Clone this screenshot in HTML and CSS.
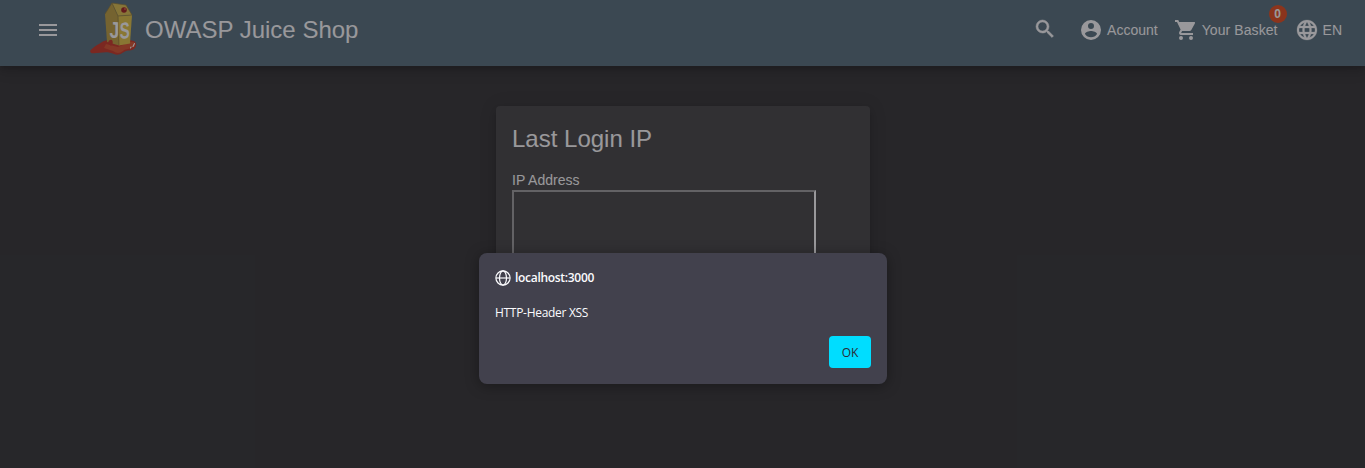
FILE: index.html
```html
<!DOCTYPE html>
<html lang="en">
<head>
<meta charset="utf-8">
<title>OWASP Juice Shop</title>
<link rel="stylesheet" href="styles.css">
</head>
<body>
<div class="app">
  <header class="toolbar">
    <svg class="icon menu" viewBox="0 0 24 24"><path d="M3 18h18v-2H3v2zm0-5h18v-2H3v2zm0-7v2h18V6H3z"/></svg>
    <svg class="logo" viewBox="0 0 48 56">
      <path fill="#c93322" d="M1 51C5 46 9 45 13 42C19 38 38 39 45 41Q49 43 46 48C42 52 39 49 35 52Q30 56 25 54C17 50 10 54 2 53Z"/>
      <path fill="#d9502a" d="M17 44L29 47L41 42Q47 41 46 46C41 50 37 48 34 51Q29 55 24 51L15 48Z"/>
      <path fill="#bd9f3c" d="M23 3L16 14L18 42L30 45.500L29 16Z"/>
      <path fill="#dcbf4c" d="M23 3L37 5L43 15L29 16Z"/>
      <path fill="#e2c343" d="M29 16L43 15L41 43.500L30 45.500Z"/>
      <path fill="none" stroke="#8c7837" stroke-width=".7" d="M23 3L37 5L43 15L29 16L23 3L16 14M29 16L30 45"/>
      <circle cx="35" cy="10" r="2.8" fill="#9e1c19"/>
      <circle cx="36" cy="9" r=".9" fill="#e25c4b"/>
      <text class="logo-letter" transform="matrix(.76 .06 0 1 20.500 37.500)">J</text>
      <text class="logo-letter" transform="matrix(.65 -.04 0 1 30.800 38.800)">S</text>
      <path fill="#c93322" d="M19 43Q20 39 23 40Q25 43 22 46Z"/>
      <path fill="none" stroke="#fff" stroke-width="1.100" stroke-linecap="round" d="M41.500 48L42 47M44 46.500L45.500 43.500"/>
    </svg>
    <span class="title">OWASP Juice Shop</span>
    <svg class="icon search" viewBox="0 0 24 24"><path d="M15.5 14h-.79l-.28-.27A6.47 6.47 0 0 0 16 9.5 6.5 6.5 0 1 0 9.500 16c1.610 0 3.090-.59 4.230-1.570l.27.28v.79l5 4.990L20.490 19l-4.990-5zm-6 0a4.500 4.500 0 1 1 0-9 4.500 4.500 0 0 1 0 9z"/></svg>
    <div class="action account">
      <svg class="icon" viewBox="0 0 24 24"><path d="M12 2a10 10 0 1 0 0 20 10 10 0 0 0 0-20zm0 3a3 3 0 1 1 0 6 3 3 0 0 1 0-6zm0 14.200a7.200 7.200 0 0 1-6-3.220c.03-1.990 4-3.080 6-3.080s5.970 1.090 6 3.080a7.200 7.200 0 0 1-6 3.220z"/></svg>
      <span>Account</span>
    </div>
    <div class="action basket">
      <svg class="icon" viewBox="0 0 24 24"><path d="M7 18a2 2 0 1 0 0 4 2 2 0 0 0 0-4zM1 2v2h2l3.600 7.590-1.350 2.450C4.520 15.370 5.480 17 7 17h12v-2H7.420a.25.25 0 0 1-.25-.25l.03-.12.900-1.630h7.450c.75 0 1.410-.41 1.750-1.030l3.580-6.490A1 1 0 0 0 20 4H5.210l-.94-2H1zm16 16a2 2 0 1 0 0 4 2 2 0 0 0 0-4z"/></svg>
      <span>Your Basket</span>
      <span class="badge">0</span>
    </div>
    <div class="action language">
      <svg class="icon globe-bold" viewBox="0 0 24 24"><path d="M11.990 2C6.470 2 2 6.480 2 12s4.470 10 9.990 10C17.520 22 22 17.520 22 12S17.520 2 11.990 2zm6.930 6h-2.950a15.650 15.650 0 0 0-1.380-3.560A8.030 8.030 0 0 1 18.920 8zM12 4.040c.83 1.200 1.480 2.530 1.910 3.960h-3.820c.43-1.430 1.080-2.760 1.910-3.960zM4.260 14C4.100 13.360 4 12.690 4 12s.1-1.360.26-2h3.380c-.08.66-.14 1.320-.14 2s.06 1.340.14 2H4.260zm.82 2h2.950c.32 1.250.78 2.450 1.380 3.560A7.990 7.990 0 0 1 5.080 16zm2.950-8H5.080a7.990 7.990 0 0 1 4.330-3.560A15.650 15.650 0 0 0 8.030 8zM12 19.960c-.83-1.200-1.480-2.530-1.910-3.960h3.820c-.43 1.430-1.080 2.760-1.910 3.960zM14.340 14H9.660c-.09-.66-.16-1.320-.16-2s.07-1.350.16-2h4.680c.09.65.16 1.320.16 2s-.07 1.340-.16 2zm.25 5.560c.6-1.110 1.060-2.310 1.380-3.560h2.950a8.030 8.030 0 0 1-4.330 3.560zM16.360 14c.08-.66.14-1.320.14-2s-.06-1.340-.14-2h3.380c.16.64.26 1.310.26 2s-.1 1.360-.26 2h-3.380z"/></svg>
      <span>EN</span>
    </div>
  </header>
  <main class="content">
    <section class="card">
      <h1 class="card-title">Last Login IP</h1>
      <div class="label">IP Address</div>
      <div class="frame"></div>
    </section>
  </main>
</div>
<div class="backdrop">
  <div class="dialog" role="alertdialog">
    <div class="origin">
      <svg class="globe" viewBox="0 0 16 16"><circle cx="8" cy="8" r="7.100"/><ellipse cx="8" cy="8" rx="3.500" ry="7.100"/><path d="M1 8h14"/></svg>
      <span>localhost:3000</span>
    </div>
    <p class="message">HTTP-Header XSS</p>
    <button class="ok">OK</button>
  </div>
</div>
</body>
</html>
```
FILE: styles.css
```css
* { box-sizing: border-box; }
body {
  margin: 0;
  height: 468px;
  overflow: hidden;
  position: relative;
  background: #303030;
  color: #fff;
  font: 14px "Liberation Sans", Arial, sans-serif;
}
.toolbar {
  height: 66px;
  padding: 0 23px 6px 36px;
  display: flex;
  align-items: center;
  background: #546e7a;
  box-shadow: 0 3px 5px -1px rgba(0,0,0,.2), 0 6px 10px rgba(0,0,0,.14), 0 1px 18px rgba(0,0,0,.12);
  position: relative;
}
.icon { width: 24px; height: 24px; fill: currentColor; flex: none; }
.logo { width: 48px; height: 56px; margin: 0 8px 4px 29px; flex: none; }
.logo-letter { font: bold 23px "Liberation Sans", Arial, sans-serif; fill: #fff; }
.title { font-size: 24px; white-space: nowrap; }
.search { margin-left: auto; margin-right: 22px; margin-bottom: 2px; stroke: currentColor; stroke-width: .5; }
.globe-bold { stroke: currentColor; stroke-width: .25; }
.action { display: flex; align-items: center; gap: 4px; white-space: nowrap; position: relative; }
.account { margin-right: 16px; }
.basket { margin-right: 17px; letter-spacing: .08px; }
.badge {
  position: absolute;
  right: -9px;
  top: -13px;
  width: 18px;
  height: 18px;
  border-radius: 50%;
  background: #e64a19;
  font: bold 12px/18px "Liberation Sans", Arial, sans-serif;
  text-align: center;
}
.content { display: flex; justify-content: center; padding-top: 40px; }
.card {
  width: 374px;
  height: 254px;
  margin-left: 1px;
  padding: 16px;
  border-radius: 4px;
  background: #424242;
  box-shadow: 0 3px 5px -1px rgba(0,0,0,.2), 0 6px 10px rgba(0,0,0,.14), 0 1px 18px rgba(0,0,0,.12);
}
.card-title { margin: 0 0 15px; font-size: 24px; line-height: 34px; font-weight: 400; }
.label { line-height: 18px; margin-bottom: 1px; }
.frame { width: 304px; height: 154px; border: 2px solid; border-color: #9d9d9d #fff #fff #9d9d9d; }
.backdrop {
  position: absolute;
  inset: 0;
  display: flex;
  justify-content: center;
  align-items: flex-start;
  padding-top: 253px;
  background: rgba(28,27,34,.45);
}
.dialog {
  width: 408px;
  height: 131px;
  margin-left: 1px;
  padding: 16px;
  display: flex;
  flex-direction: column;
  border-radius: 8px;
  background: #42414d;
  color: #fbfbfe;
  box-shadow: 0 2px 14px rgba(0,0,0,.35);
  font: 12px/18px "Open Sans", "Noto Sans", sans-serif;
  letter-spacing: -.3px;
}
.origin { display: flex; align-items: center; gap: 4px; font-weight: 600; }
.globe { width: 16px; height: 16px; fill: none; stroke: currentColor; stroke-width: 1.2; }
.message { margin: 17px 0 14px; }
.ok {
  align-self: flex-end;
  width: 42px;
  height: 32px;
  padding: 2px 0 0;
  border: 0;
  border-radius: 4px;
  background: #00ddff;
  color: #2b2a33;
  font: inherit;
}
```
